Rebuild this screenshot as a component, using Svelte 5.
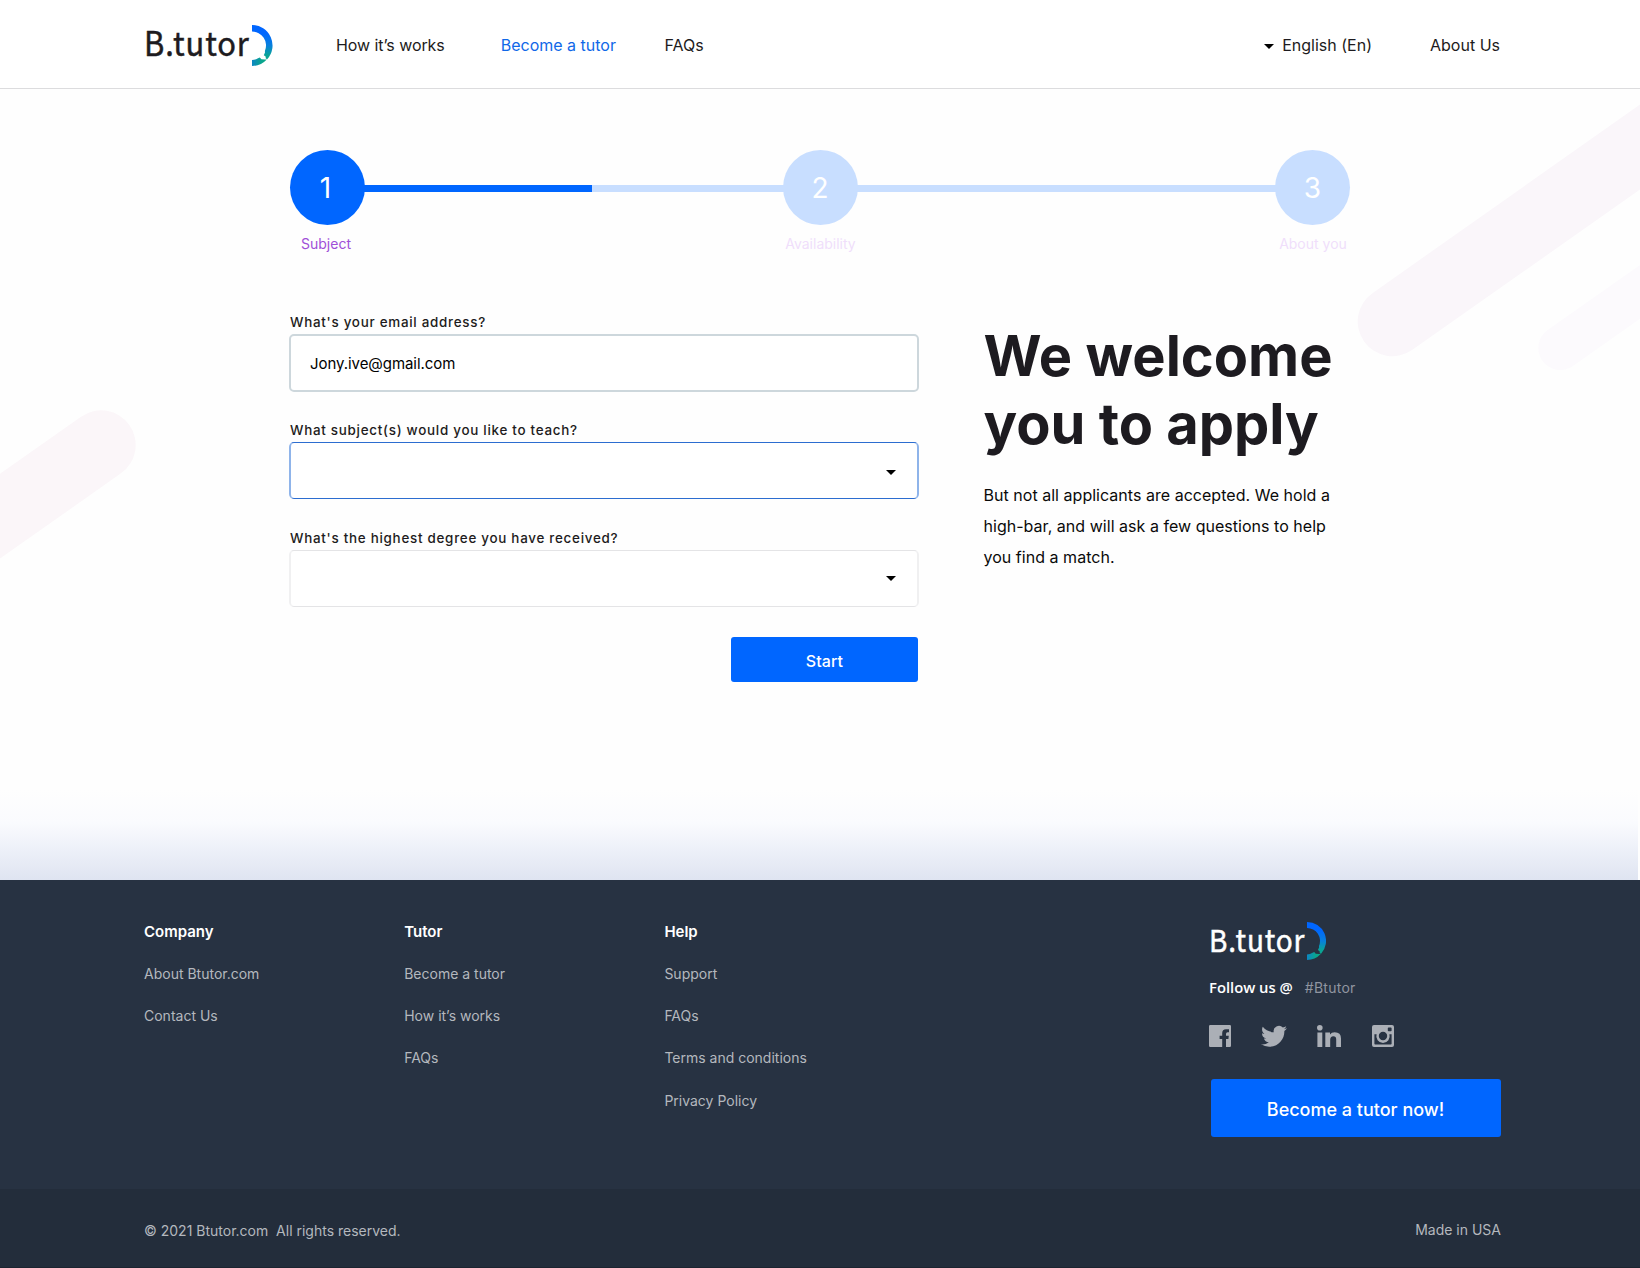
<script>
  const steps = [
    { number: 1, label: 'Subject', state: 'active' },
    { number: 2, label: 'Availability', state: 'todo' },
    { number: 3, label: 'About you', state: 'todo' }
  ];
  const footerColumns = [
    { title: 'Company', links: ['About Btutor.com', 'Contact Us'] },
    { title: 'Tutor', links: ['Become a tutor', 'How it’s works', 'FAQs'] },
    { title: 'Help', links: ['Support', 'FAQs', 'Terms and conditions', 'Privacy Policy'] }
  ];
  let email = $state('Jony.ive@gmail.com');
</script>

{#snippet logo(id)}
  <span class="word">B.tutor</span>
  <svg class="mark" viewBox="0 0 20.5 41">
    <defs>
      <linearGradient id={id} x1="9" y1="0" x2="9" y2="41" gradientUnits="userSpaceOnUse">
        <stop offset="0.2" stop-color="#0066ff" />
        <stop offset="0.5" stop-color="#0880dc" />
        <stop offset="0.75" stop-color="#0aa594" />
      </linearGradient>
      <linearGradient id={id + '-tail'} x1="0" y1="0" x2="14" y2="0" gradientUnits="userSpaceOnUse">
        <stop offset="0" stop-color="#0c86c4" />
        <stop offset="0.7" stop-color="#0aa68c" />
      </linearGradient>
    </defs>
    <path fill="url(#{id})" d="M0 0A20.5 20.5 0 0 1 15.2 34.3L13.8 33.6L13.6 31.6L11.8 30.2L13 27.6L12.9 26A14 14 0 0 0 0 6.5Z" />
    <path fill="url(#{id}-tail)" d="M14.8 34.5A20.5 20.5 0 0 1 0 41V35Q3.4 35 6 33.2L7.8 32.4L9.4 34.2L13 34.5Z" />
  </svg>
{/snippet}

{#snippet caret()}
  <svg class="caret" viewBox="0 0 10 5"><path d="M0 0H10L5 5Z" /></svg>
{/snippet}

<div class="page">
  <svg class="backdrop" viewBox="0 0 1640 792">
    <path d="M1392.4 233.5L1792.4 -48.3" stroke="#faf6fa" stroke-width="69.4" />
    <path d="M1560.3 260L1960.3 -21.8" stroke="#fcfafd" stroke-width="44" />
    <path d="M101 357L-299 638.8" stroke="#fbf6f9" stroke-width="69.4" />
  </svg>

  <header>
    <a class="logo">{@render logo('ring')}</a>
    <nav>
      <a>How it’s works</a>
      <a class="current">Become a tutor</a>
      <a>FAQs</a>
    </nav>
    <a class="lang">{@render caret()}English (En)</a>
    <a>About Us</a>
  </header>

  <main>
    <ol class="stepper">
      {#each steps as step, i}
        {#if i > 0}
          <li class="track"><span style="width: {i === 1 ? 54.4 : 0}%"></span></li>
        {/if}
        <li class="step {step.state}">
          <b>{step.number}</b>
          <span>{step.label}</span>
        </li>
      {/each}
    </ol>

    <div class="content">
      <form>
        <label for="email">What's your email address?</label>
        <input id="email" class="field filled" bind:value={email} />
        <div class="label">What subject(s) would you like to teach?</div>
        <div class="field focused">{@render caret()}</div>
        <div class="label">What's the highest degree you have received?</div>
        <div class="field">{@render caret()}</div>
        <button class="start" type="button">Start</button>
      </form>
      <section class="intro">
        <h1>We welcome<br />you to apply</h1>
        <p>
          But not all applicants are accepted. We hold a<br />high-bar, and will ask a few
          questions to help<br />you find a match.
        </p>
      </section>
    </div>
    <div class="fade"></div>
  </main>

  <footer>
    <div class="top">
      {#each footerColumns as column}
        <div class="column">
          <h2>{column.title}</h2>
          {#each column.links as link}<a>{link}</a>{/each}
        </div>
      {/each}
      <div class="social">
        <div class="logo small">{@render logo('ring-small')}</div>
        <div class="follow"><b>Follow us @</b><span>#Btutor</span></div>
        <div class="icons">
          <svg width="22" height="22" viewBox="0 0 22 22">
            <path d="M1.2 0H20.8Q22 0 22 1.2V20.8Q22 22 20.8 22H17V14H19.4L19.8 10.8H17V9Q17 7.2 18.6 7.2H20V4.2H17Q13.2 4.2 13.2 8.2V10.8H10.6V14H13.2V22H1.2Q0 22 0 20.8V1.2Q0 0 1.2 0Z" />
          </svg>
          <svg class="bird" width="26" height="22" viewBox="0 1.5 24 20.5" preserveAspectRatio="none">
            <path d="M23.954 4.569a10 10 0 0 1-2.825.775 4.958 4.958 0 0 0 2.163-2.723c-.951.555-2.005.959-3.127 1.184a4.92 4.92 0 0 0-8.384 4.482C7.691 8.094 4.066 6.13 1.64 3.161a4.822 4.822 0 0 0-.666 2.475c0 1.71.87 3.213 2.188 4.096a4.904 4.904 0 0 1-2.228-.616v.061a4.923 4.923 0 0 0 3.946 4.827 4.996 4.996 0 0 1-2.212.085 4.937 4.937 0 0 0 4.604 3.417 9.868 9.868 0 0 1-6.102 2.105c-.39 0-.779-.023-1.17-.067a13.995 13.995 0 0 0 7.557 2.209c9.054 0 13.999-7.496 13.999-13.986 0-.209 0-.42-.015-.63a9.936 9.936 0 0 0 2.46-2.548z" />
          </svg>
          <svg class="linked" width="24" height="22" viewBox="0 0 24 22">
            <circle cx="2.8" cy="2.8" r="2.8" />
            <path d="M0.4 7.6H5.3V22H0.4ZM8.3 7.6H13V9.5Q14.4 7.2 17.7 7.2Q24 7.2 24 13.4V22H19.2V14.6Q19.2 11.3 16.4 11.3Q13.2 11.3 13.2 14.8V22H8.3Z" />
          </svg>
          <svg class="insta" width="22" height="22" viewBox="0 0 22 22">
            <path fill-rule="evenodd" d="M2 0H20Q22 0 22 2V20Q22 22 20 22H2Q0 22 0 20V2Q0 0 2 0ZM16.6 2.4Q15.8 2.4 15.8 3.2V5.4Q15.8 6.2 16.6 6.2H18.8Q19.6 6.2 19.6 5.4V3.2Q19.6 2.4 18.8 2.4ZM2.4 9.2V18.8Q2.4 19.6 3.2 19.6H18.8Q19.6 19.6 19.6 18.8V9.2H17.4A6.7 6.7 0 1 1 4.6 9.2ZM11 6.8A4.2 4.2 0 1 0 11 15.2A4.2 4.2 0 1 0 11 6.8Z" />
          </svg>
        </div>
        <button class="cta" type="button">Become a tutor now!</button>
      </div>
    </div>
    <div class="bottom">
      <span class="copy">© 2021 Btutor.com&nbsp; All rights reserved.</span>
      <span>Made in USA</span>
    </div>
  </footer>
</div>

<style>
  :global(body) {
    margin: 0;
    background: #fefefe;
  }
  .page {
    position: relative;
    width: 1640px;
    height: 1268px;
    overflow: hidden;
    display: flex;
    flex-direction: column;
    font-family: Inter, 'Liberation Sans', sans-serif;
    font-size: 16px;
    color: #1d1b20;
  }
  .page * {
    box-sizing: border-box;
  }
  button,
  input {
    font-family: inherit;
    margin: 0;
    border: 0;
    outline: 0;
  }
  .backdrop {
    position: absolute;
    z-index: -1;
    top: 88px;
    left: 0;
    width: 1640px;
    height: 792px;
    fill: none;
    stroke-linecap: round;
  }

  header {
    height: 89px;
    flex: none;
    display: flex;
    align-items: center;
    padding: 2px 140px 0 144px;
    border-bottom: 1px solid #dcdcde;
    background: #fff;
  }
  .logo {
    display: flex;
    align-items: center;
    width: 129px;
  }
  .word {
    width: 108px;
    padding-bottom: 6px;
    font: 400 33.6px/40px 'Noto Sans CJK SC', 'Noto Sans', sans-serif;
    letter-spacing: 0.95px;
    white-space: nowrap;
    transform: scaleX(0.92);
    transform-origin: 0 50%;
    -webkit-text-stroke: 0.5px currentColor;
  }
  .mark {
    width: 20.5px;
    height: 41px;
  }
  header .mark {
    margin-top: 1px;
  }
  nav {
    display: flex;
    flex: 1;
    margin-left: 63px;
  }
  nav a:first-child {
    letter-spacing: -0.07px;
  }
  nav a:nth-child(2) {
    margin: 0 48.5px 0 56px;
  }
  .current {
    color: #1068e8;
  }
  .lang {
    display: flex;
    align-items: center;
    margin-right: 58px;
  }
  .caret {
    width: 10px;
    height: 5px;
    fill: #000;
  }
  .lang .caret {
    margin: 2px 8px 0 0;
  }

  main {
    height: 791px;
    flex: none;
    display: flex;
    flex-direction: column;
  }
  .stepper {
    display: flex;
    width: 1060px;
    height: 104px;
    margin: 61px 0 0 290px;
    padding: 0;
    list-style: none;
  }
  .step {
    width: 75px;
    display: flex;
    flex-direction: column;
    align-items: center;
    gap: 9px;
    font-size: 14px;
    line-height: 20px;
    white-space: nowrap;
    color: #f0defb;
  }
  .step b {
    width: 75px;
    height: 75px;
    border-radius: 50%;
    background: #c8deff;
    color: #fff;
    font-size: 28px;
    line-height: 76px;
    font-weight: 400;
    text-align: center;
  }
  .step.todo span {
    margin-left: 1px;
  }
  .step.active {
    color: #a04fd8;
  }
  .step.active span {
    margin-right: 3px;
  }
  .step.active b {
    background: #0066ff;
    padding-right: 4px;
  }
  .track {
    flex: 1;
    height: 7px;
    margin: 35px -1px 0;
    background: #c8deff;
  }
  .track span {
    display: block;
    height: 7px;
    background: #0066ff;
  }

  .content {
    display: flex;
    margin: 58px 0 0 289px;
  }
  form {
    width: 630px;
    display: flex;
    flex-direction: column;
  }
  label,
  .label {
    height: 22px;
    padding-left: 1px;
    font-size: 13.4px;
    line-height: 20px;
    font-weight: 500;
    letter-spacing: 0.73px;
  }
  .field {
    height: 57px;
    margin-bottom: 29px;
    padding: 0 21px 0 20px;
    display: flex;
    align-items: center;
    justify-content: flex-end;
    background: #fff;
    border: solid;
    border-width: 1px 2px;
    border-color: #e4e4e6 #f0f0f1;
    border-radius: 5px;
  }
  .filled {
    height: 58px;
    margin-bottom: 28px;
    border: 2px solid #cdd7dc;
    padding: 0 18px 0 19px;
    font-size: 15px;
    letter-spacing: -0.06px;
    color: #000;
  }
  .focused {
    border-color: #2c6dd0 #8fb4ea;
    padding-top: 4px;
  }
  .start {
    width: 187px;
    height: 45px;
    margin: 1px 1px 0 0;
    align-self: flex-end;
    padding: 3px 0 0;
    border-radius: 3px;
    background: #0066ff;
    color: #fff;
    font-size: 16px;
    font-weight: 500;
    letter-spacing: 0.1px;
  }
  .intro {
    margin: 10px 0 0 64.5px;
  }
  h1 {
    margin: 0 0 22px;
    font-size: 56px;
    line-height: 68px;
    font-weight: 700;
  }
  .intro p {
    margin: 0;
    line-height: 31px;
    letter-spacing: 0.03px;
    color: #0a0a0a;
  }
  .fade {
    width: 1638px;
    height: 90px;
    margin-top: auto;
    background: linear-gradient(#fefefe00, #fafbfe 36%, #eef1f9 64%, #dfe4f1);
  }

  footer {
    height: 388px;
    flex: none;
    display: flex;
    flex-direction: column;
    background: #273242;
    color: #b4b8be;
    font-size: 14px;
  }
  .top {
    height: 309px;
    display: flex;
    padding: 42px 139px 0 144px;
  }
  .column {
    width: 260.2px;
    display: flex;
    flex-direction: column;
    gap: 22px;
    line-height: 20px;
  }
  .column h2 {
    margin: 0;
    font-size: 15px;
    line-height: 20px;
    font-weight: 600;
    color: #fff;
  }
  .column a:nth-child(5) {
    margin-top: 1px;
  }
  .social {
    width: 292px;
    margin-left: auto;
  }
  .small {
    width: 120px;
    height: 38px;
    color: #fff;
  }
  .small .word {
    width: 98px;
    padding-bottom: 5px;
    font-size: 30.4px;
    letter-spacing: 0.95px;
  }
  .small .mark {
    width: 19px;
    height: 38px;
  }
  .follow {
    display: flex;
    align-items: center;
    gap: 12px;
    height: 20px;
    margin-top: 17px;
    color: #9095a0;
  }
  .follow b {
    font-family: 'Open Sans', sans-serif;
    font-size: 14.8px;
    font-weight: 600;
    color: #fff;
  }
  .follow span {
    letter-spacing: 0.25px;
  }
  .icons {
    display: flex;
    height: 22px;
    margin-top: 28px;
    fill: #abafb6;
  }
  .bird {
    margin-left: 30px;
  }
  .linked {
    margin-left: 30px;
  }
  .insta {
    margin-left: 31px;
  }
  .cta {
    width: 290px;
    height: 58px;
    margin: 32px 0 0 2px;
    padding: 3px 1px 0 0;
    border-radius: 3px;
    background: #0066ff;
    color: #fff;
    font-size: 18px;
    font-weight: 500;
  }
  .bottom {
    height: 79px;
    display: flex;
    align-items: center;
    justify-content: space-between;
    padding: 3px 139px 0 144px;
    background: #232d3b;
    border-bottom: 1px solid #1c2430;
  }
  .copy {
    padding-top: 1px;
  }
</style>
